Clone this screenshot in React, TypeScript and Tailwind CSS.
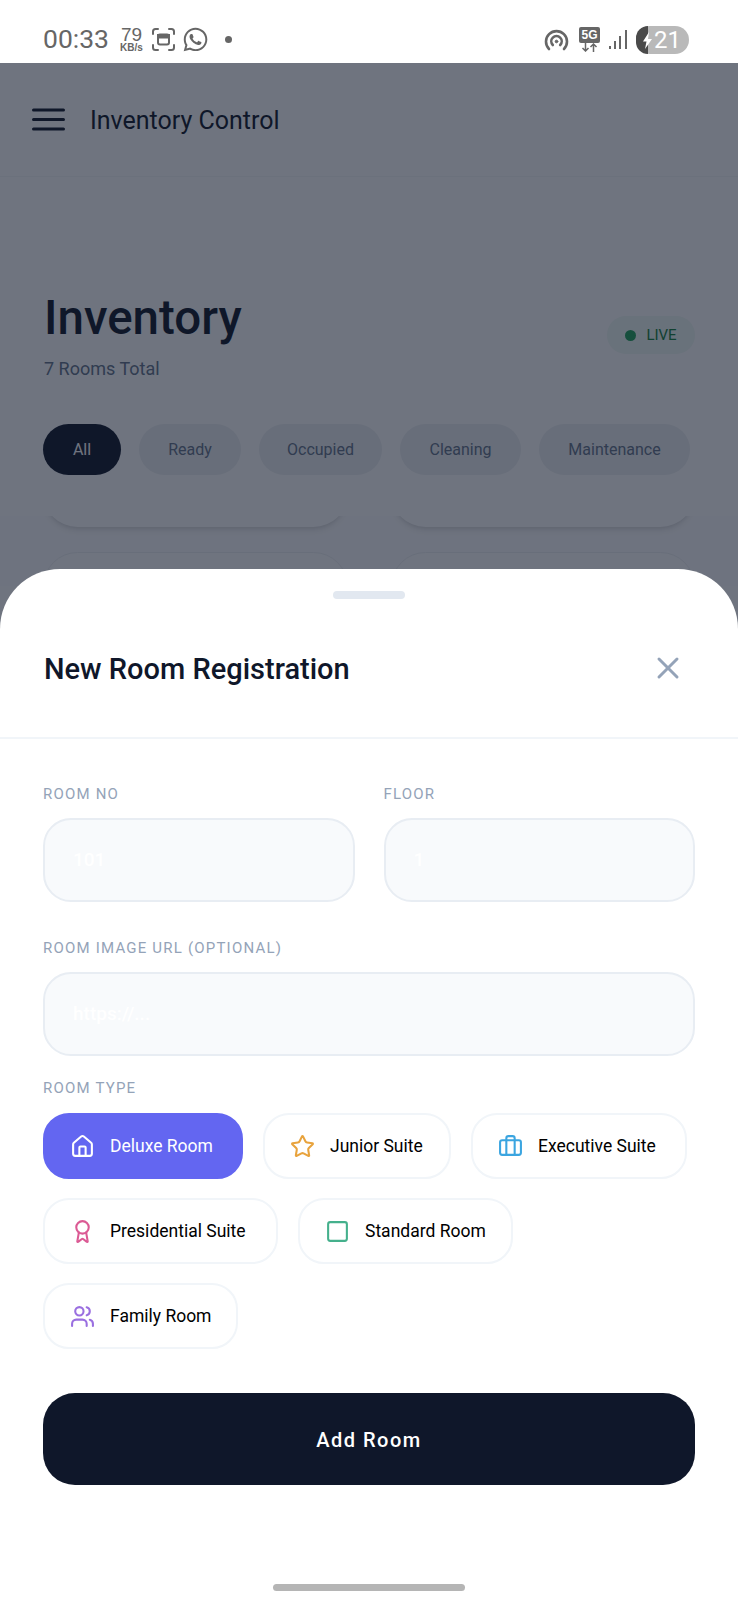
import React from 'react'
import { Award, Briefcase, House, Square, Star, Users, X } from 'lucide-react'
import { FaWhatsapp } from 'react-icons/fa'

const filters = [
  { label: 'All', w: 'w-[78px]', active: true },
  { label: 'Ready', w: 'w-[102px]' },
  { label: 'Occupied', w: 'w-[123px]' },
  { label: 'Cleaning', w: 'w-[121px]' },
  { label: 'Maintenance', w: 'w-[151px]' },
]

const rows = [
  [
    { label: 'Deluxe Room', Icon: House, color: 'text-white', w: 'w-[200px]', active: true },
    { label: 'Junior Suite', Icon: Star, color: 'text-[#e8a33d]', w: 'w-[188px]' },
    { label: 'Executive Suite', Icon: Briefcase, color: 'text-[#3ba5e0]', w: 'w-[216px]' },
  ],
  [
    { label: 'Presidential Suite', Icon: Award, color: 'text-[#db5a94]', w: 'w-[235px]' },
    { label: 'Standard Room', Icon: Square, color: 'text-[#45b08c]', w: 'w-[215px]' },
  ],
  [{ label: 'Family Room', Icon: Users, color: 'text-[#9a6fe0]', w: 'w-[195px]' }],
]

function StatusBar() {
  return (
    <div className="relative z-20 flex h-[63px] items-center justify-between bg-white pt-[16px] pl-[43px] pr-[49px] text-[#666666]">
      <div className="flex items-center">
        <span className="w-[66px] text-[26.500px] leading-none font-['Roboto',sans-serif]">00:33</span>
        <div className="ml-[9px] flex w-[27px] flex-col items-center font-['Liberation_Sans',sans-serif] leading-none">
          <span className="text-[19px] leading-[16px] font-medium">79</span>
          <span className="text-[10px] leading-[9px] font-bold">KB/s</span>
        </div>
        <svg className="ml-[6px]" width="25" height="25" viewBox="0 0 25 25" fill="none" stroke="currentColor" strokeWidth="2" strokeLinecap="round">
          <path d="M2 7V4.500Q2 2 4.500 2H7M18 2h2.500Q23 2 23 4.500V7M23 18v2.500Q23 23 20.500 23H18M7 23H4.500Q2 23 2 20.500V18" />
          <rect x="7" y="7.500" width="11" height="10" rx="2" />
          <path d="M7 10.500h11V8H7z" fill="currentColor" />
        </svg>
        <FaWhatsapp className="ml-[6px]" size={27} />
        <span className="ml-[16px] h-[7px] w-[7px] rounded-full bg-[#666666]" />
      </div>
      <div className="flex items-center">
        <svg width="25" height="25" viewBox="0 0 25 25" fill="none" stroke="currentColor" strokeWidth="2.600" strokeLinecap="round">
          <path d="M5 22a10.500 10.500 0 1 1 15 0" />
          <path d="M8.800 18a5.200 5.200 0 1 1 7.400 0" />
          <circle cx="12.500" cy="14.500" r="1.300" fill="currentColor" strokeWidth="1" />
        </svg>
        <div className="ml-[10px] flex w-[21px] flex-col items-center">
          <span className="flex h-[16px] w-[21px] items-center justify-center rounded-[2px] bg-[#666666] font-['Liberation_Sans',sans-serif] text-[12px] leading-none font-bold text-white">5G</span>
          <svg width="17" height="9" viewBox="0 0 17 9" fill="none" stroke="currentColor" strokeWidth="1.500">
            <path d="M4.500 0v8M1.500 5l3 3 3-3M12.500 9V1M9.500 4l3-3 3 3" />
          </svg>
        </div>
        <svg className="ml-[8px]" width="20" height="20" viewBox="0 0 20 20" fill="currentColor">
          <rect x="1" y="16" width="2" height="3" />
          <rect x="6" y="11" width="2" height="8" />
          <rect x="11" y="6" width="2" height="13" />
          <rect x="17" y="0" width="2" height="19" />
        </svg>
        <div className="relative ml-[8px] flex h-[28px] w-[53px] items-center justify-end rounded-full bg-[#b9b9b9] pr-[8px]">
          <div className="absolute left-0 top-0 h-[28px] w-[12px] rounded-l-full bg-[#4a4a4a]" />
          <svg className="absolute left-[6px] top-[6px]" width="11" height="17" viewBox="0 0 11 17" fill="white">
            <path d="M7 0 1 9.500h3.500L3 17l7-10H6z" />
          </svg>
          <span className="text-[24px] leading-none text-white font-['Roboto',sans-serif]">21</span>
        </div>
      </div>
    </div>
  )
}

function Backdrop() {
  return (
    <div className="bg-white font-['Roboto',sans-serif]">
      <div className="flex h-[114px] items-center gap-[25px] border-b border-[#f6f7f8] pl-[32px]">
        <svg width="33" height="23" viewBox="0 0 33 23" fill="none" stroke="#0f172a" strokeWidth="3" strokeLinecap="round">
          <path d="M1.500 2h30M1.500 11.500h30M1.500 21h30" />
        </svg>
        <span className="mt-[2px] text-[25px] leading-none text-[#0f172a]">Inventory Control</span>
      </div>
      <div className="flex items-center justify-between pl-[44px] pr-[43px] pt-[115px]">
        <div>
          <h1 className="text-[47.500px] leading-[52px] font-medium text-[#0f172a]">Inventory</h1>
          <p className="mt-[13px] text-[18px] leading-[24px] text-[#64748b]">7 Rooms Total</p>
        </div>
        <div className="-mt-[3px] flex h-[38px] w-[88px] items-center justify-center gap-[10px] rounded-full bg-[#f0f9f4]">
          <span className="h-[11px] w-[11px] rounded-full bg-[#22a35a]" />
          <span className="text-[15px] text-[#15803d]">LIVE</span>
        </div>
      </div>
      <div className="mt-[43px] flex gap-[18px] pl-[43px]">
        {filters.map((f) => (
          <div
            key={f.label}
            className={`flex h-[51px] shrink-0 items-center justify-center rounded-full text-[16px] ${f.w} ${
              f.active ? 'bg-[#0f172a] text-white' : 'bg-[#eef0f2] text-[#64748b]'
            }`}
          >
            {f.label}
          </div>
        ))}
      </div>
      <div className="mt-[41px] h-[70px] overflow-hidden bg-[#fdfdfe]">
        <div className="grid grid-cols-2 gap-x-[43px] gap-y-[25px] px-[43px]">
          <div className="-mt-[58px] h-[69px] rounded-[36px] bg-white shadow-md" />
          <div className="-mt-[58px] h-[69px] rounded-[36px] bg-white shadow-md" />
          <div className="h-[69px] rounded-[36px] border border-[#eef0f3] bg-white" />
          <div className="h-[69px] rounded-[36px] border border-[#eef0f3] bg-white" />
        </div>
      </div>
    </div>
  )
}

function Field({ label, hint, className }: { label: string; hint: string; className?: string }) {
  return (
    <div className={className}>
      <div className="text-[15px] leading-[20px] tracking-[1.200px] text-[#94a3b8]">{label}</div>
      <div className="mt-[14px] flex h-[84px] items-center rounded-[28px] border-2 border-[#e8edf3] bg-[#f8fafc] px-[28px] text-[19px] font-medium text-white">
        {hint}
      </div>
    </div>
  )
}

function Sheet() {
  return (
    <div className="absolute inset-x-0 top-[569px] z-10 h-[1031px] rounded-t-[60px] bg-white font-['Roboto',sans-serif]">
      <div className="flex justify-center pt-[22px]">
        <div className="h-[8px] w-[72px] rounded-full bg-[#e2e8f0]" />
      </div>
      <div className="mt-[47px] flex h-[93px] items-start justify-between border-b-2 border-[#f1f5f9] pl-[44px] pr-[52px]">
        <h2 className="text-[29px] leading-[46px] font-medium text-[#0f172a]">New Room Registration</h2>
        <X className="mt-[4px] text-[#94a3b8]" size={36} strokeWidth={2} />
      </div>
      <div className="pl-[43px] pr-[43px] pt-[45px]">
        <div className="grid grid-cols-2 gap-[29px]">
          <Field label="ROOM NO" hint="101" />
          <Field label="FLOOR" hint="1" />
        </div>
        <Field className="mt-[36px]" label="ROOM IMAGE URL (OPTIONAL)" hint="https://..." />
        <div className="mt-[22px] text-[15px] leading-[20px] tracking-[1.200px] text-[#94a3b8]">ROOM TYPE</div>
        <div className="mt-[15px] flex flex-col gap-[19px]">
          {rows.map((row, i) => (
            <div key={i} className="flex gap-[20px]">
              {row.map(({ label, Icon, color, w, active }) => (
                <div
                  key={label}
                  className={`flex h-[66px] shrink-0 items-center gap-[15px] rounded-[26px] border-2 pl-[25px] ${w} ${
                    active ? 'border-[#6366f1] bg-[#6366f1] text-white' : 'border-[#f1f5f9] bg-white text-black'
                  }`}
                >
                  <Icon className={color} size={25} strokeWidth={2} />
                  <span className="mt-[1px] text-[17.500px] leading-none">{label}</span>
                </div>
              ))}
            </div>
          ))}
        </div>
        <div className="mt-[44px] flex h-[92px] items-center justify-center rounded-[32px] bg-[#0f172a] pt-[1px] text-[20px] font-medium tracking-[1.500px] text-white">
          Add Room
        </div>
      </div>
      <div className="absolute bottom-[9px] left-[273px] h-[7px] w-[192px] rounded-full bg-[#b5b5b5]" />
    </div>
  )
}

export default function App() {
  return (
    <div className="relative h-[1600px] w-[738px] overflow-hidden bg-white">
      <StatusBar />
      <Backdrop />
      <div className="absolute inset-x-0 top-[63px] bottom-0 bg-[#0f172a]/60" />
      <Sheet />
    </div>
  )
}
